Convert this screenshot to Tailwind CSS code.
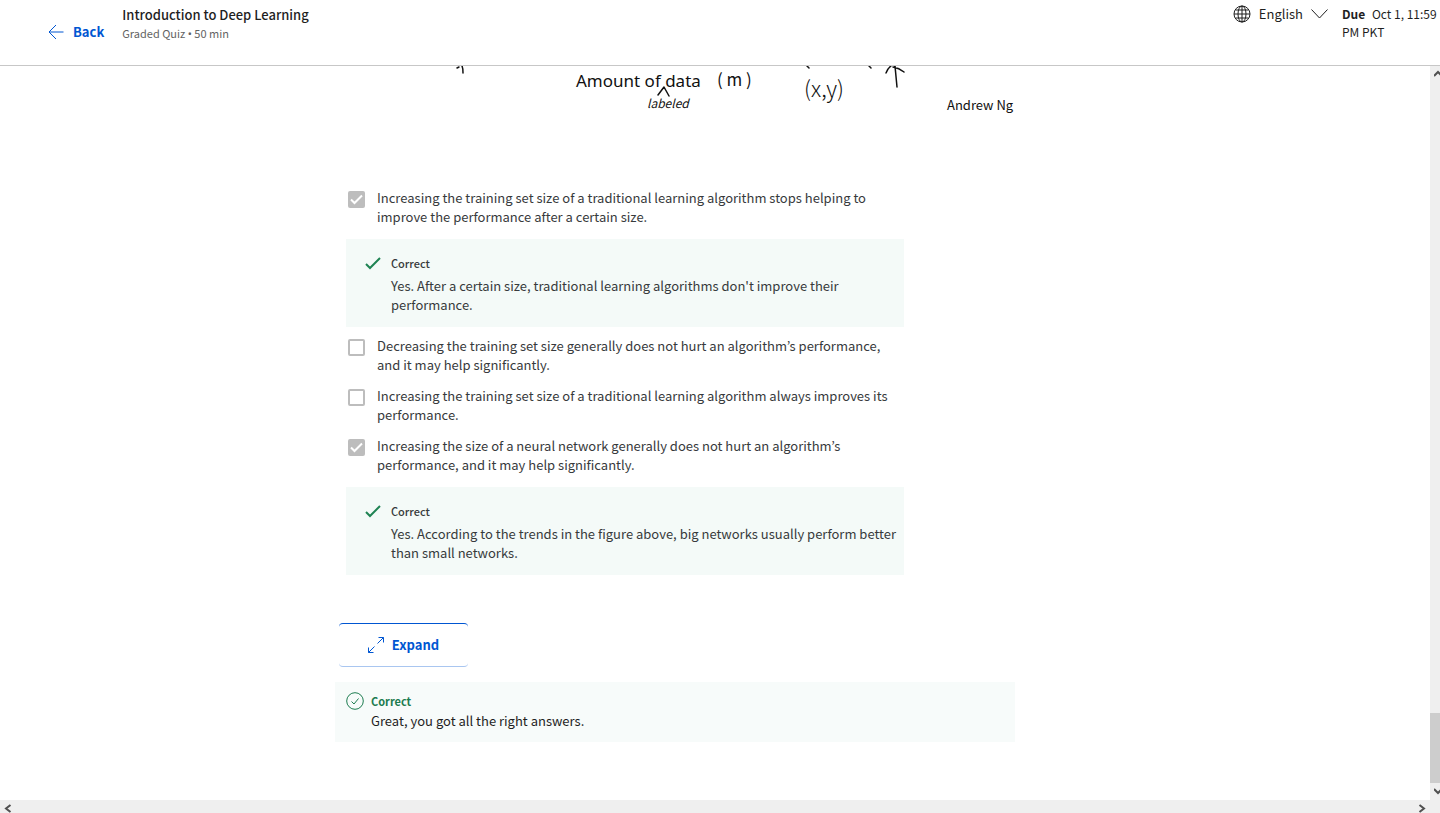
<!DOCTYPE html>
<html lang="en">
<head>
<meta charset="utf-8">
<meta name="viewport" content="width=device-width, initial-scale=1">
<title>Introduction to Deep Learning</title>
<script src="https://cdn.jsdelivr.net/npm/@tailwindcss/browser@4"></script>
</head>
<body class="flex h-screen flex-col overflow-hidden bg-white font-['Noto_Sans_CJK_KR','Noto_Sans',sans-serif] text-[#1f1f1f]">
<header class="flex h-[66px] shrink-0 items-start justify-between border-b border-[#c7c7c7]">
  <div class="flex items-start pl-12">
    <a href="#" class="flex items-center gap-2 pt-[22px] text-[13px] leading-5 font-bold text-[#0056d2]">
      <svg class="h-4 w-4" viewBox="0 0 16 16" fill="none" stroke="currentColor" stroke-width="1"><path d="M15.500 8H1M8 1L1 8l7 7"/></svg>
      <span class="pl-px">Back</span>
    </a>
    <div class="pt-[5px] pl-[18px]">
      <h1 class="text-[13px] leading-[19px] font-medium">Introduction to Deep Learning</h1>
      <p class="text-[11px] leading-[19px] text-[#636363]">Graded Quiz <span class="font-['Noto_Sans']">•</span> 50 min</p>
    </div>
  </div>
  <div class="flex items-start pt-[5px]">
    <button type="button" class="flex items-center gap-2 text-[13px] leading-[18px]">
      <svg class="h-[18px] w-[18px]" viewBox="0 0 18 18" fill="none" stroke="#1f1f1f" stroke-width="1"><circle cx="9" cy="9" r="8"/><ellipse cx="9" cy="9" rx="4" ry="8"/><path d="M9 1v16M1 9h16M2.500 5h13M2.500 13h13"/></svg>
      <span>English</span>
      <svg class="h-[10px] w-[17px]" viewBox="0 0 17 10" fill="none" stroke="#1f1f1f" stroke-width="1"><path d="M.5.500l8 8.500 8-8.500"/></svg>
    </button>
    <p class="ml-[14px] w-[98px] text-xs leading-[18px]"><strong class="mr-1 font-bold">Due</strong> Oct 1, 11:59 PM PKT</p>
  </div>
</header>

<div class="flex min-h-0 flex-1">
  <main class="min-w-0 flex-1 overflow-hidden pl-[335px] text-[#373a3c]">
    <div class="max-w-[680px]">
      <svg class="block h-[122px] w-[680px]" viewBox="0 0 680 122" fill="none" stroke="#111" stroke-width="1.500" stroke-linecap="round" stroke-linejoin="round" role="img" aria-label="Chart axis label">
        <path d="M122 2l2-1M127 0q1 2 1 7M323 29l6-8 5 9M472 0l2 2M534 0l2 2M551 7q2-5 5-7M560 0l2 21M558 1q6 1 11 5"/>
        <g stroke="none" fill="#111">
          <text x="241" y="21" font-family="Noto Sans, sans-serif" font-size="17">Amount of data</text>
          <text x="382" y="20" font-family="Noto Sans CJK KR, sans-serif" font-size="17">( m )</text>
          <text x="469" y="31" font-family="Noto Sans CJK KR, sans-serif" font-size="22" font-weight="300">(x,y)</text>
          <text x="312" y="42" font-family="Noto Sans CJK KR, sans-serif" font-size="12" font-style="italic">labeled</text>
          <text x="612" y="44" font-family="Noto Sans CJK KR, sans-serif" font-size="13">Andrew Ng</text>
        </g>
      </svg>

      <div class="pl-[11px] text-[13px] leading-[19px]">
        <div class="w-[558px]">
          <label class="flex gap-3 pr-1 pl-[2px]">
            <span class="relative mt-[3px] h-[17px] w-[17px] shrink-0">
              <input type="checkbox" checked disabled class="block h-[17px] w-[17px] appearance-none rounded-xs bg-[#bdbdbd]">
              <svg class="absolute inset-0" viewBox="0 0 17 17" fill="none" stroke="#fff" stroke-width="2"><path d="M3 8.500l3.500 3.500L14 4.500"/></svg>
            </span>
            <span>Increasing the training set size of a traditional learning algorithm stops helping to improve the performance after a certain size.</span>
          </label>
          <section class="mt-[13px] flex gap-[10px] bg-[#f4faf8] pt-[15px] pr-1 pb-[13px] pl-[19px]">
            <svg class="mt-[3px] h-[13px] w-4 shrink-0" viewBox="0 0 16 13" fill="none" stroke="#1f8354" stroke-width="2"><path d="M1 7l4 4L15 1"/></svg>
            <div><h2 class="mb-[3px] text-[11px] leading-[19px] font-medium">Correct</h2><p>Yes. After a certain size, traditional learning algorithms don't improve their performance.</p></div>
          </section>
          <label class="mt-[9px] flex gap-3 pr-1 pl-[2px]">
            <input type="checkbox" disabled class="mt-[3px] block h-[17px] w-[17px] shrink-0 appearance-none rounded-xs border-2 border-[#bdbdbd] bg-white">
            <span>Decreasing the training set size generally does not hurt an algorithm’s performance, and it may help significantly.</span>
          </label>
          <label class="mt-3 flex gap-3 pr-1 pl-[2px]">
            <input type="checkbox" disabled class="mt-[3px] block h-[17px] w-[17px] shrink-0 appearance-none rounded-xs border-2 border-[#bdbdbd] bg-white">
            <span>Increasing the training set size of a traditional learning algorithm always improves its performance.</span>
          </label>
          <label class="mt-3 flex gap-3 pr-1 pl-[2px]">
            <span class="relative mt-[3px] h-[17px] w-[17px] shrink-0">
              <input type="checkbox" checked disabled class="block h-[17px] w-[17px] appearance-none rounded-xs bg-[#bdbdbd]">
              <svg class="absolute inset-0" viewBox="0 0 17 17" fill="none" stroke="#fff" stroke-width="2"><path d="M3 8.500l3.500 3.500L14 4.500"/></svg>
            </span>
            <span>Increasing the size of a neural network generally does not hurt an algorithm’s performance, and it may help significantly.</span>
          </label>
          <section class="mt-[13px] flex gap-[10px] bg-[#f4faf8] pt-[15px] pr-1 pb-[13px] pl-[19px]">
            <svg class="mt-[3px] h-[13px] w-4 shrink-0" viewBox="0 0 16 13" fill="none" stroke="#1f8354" stroke-width="2"><path d="M1 7l4 4L15 1"/></svg>
            <div><h2 class="mb-[3px] text-[11px] leading-[19px] font-medium">Correct</h2><p>Yes. According to the trends in the figure above, big networks usually perform better than small networks.</p></div>
          </section>
        </div>
      </div>

      <button type="button" class="mt-12 ml-1 flex h-11 w-[129px] items-center justify-center gap-2 rounded border-y border-t-[#0056d2] border-b-[#a9c6f0] text-[13px] font-bold text-[#0056d2]">
        <svg class="h-4 w-4" viewBox="0 0 16 16" fill="none" stroke="currentColor" stroke-width="1"><path d="M9.500 6.500l6-6M10.500.500h5v5M6.500 9.500l-6 6M.500 10.500v5h5"/></svg>
        Expand
      </button>
      <section class="mt-[15px] flex gap-[7px] bg-[#f7fbfa] pt-[9px] pb-[11px] pl-[11px] text-[13px] leading-5 text-[#1f1f1f]">
        <svg class="mt-px h-[18px] w-[18px] shrink-0" viewBox="0 0 18 18" fill="none" stroke="#1d7c50" stroke-width="1"><circle cx="9" cy="9" r="8.300"/><path d="M5.500 9.500l2.500 2.500 4.500-5.500"/></svg>
        <div><h2 class="text-[11px] leading-5 font-bold text-[#1d7c50]">Correct</h2><p>Great, you got all the right answers.</p></div>
      </section>
    </div>
  </main>
  <div class="flex w-[10px] shrink-0 flex-col items-end overflow-hidden bg-[#efefef]" aria-hidden="true">
    <svg class="mt-1 h-[7px] w-[6px] shrink-0" viewBox="0 0 6 7" fill="none" stroke="#505050" stroke-width="2"><path d="M0 6l4-4 4 4"/></svg>
    <div class="flex-1"></div>
    <div class="h-[70px] w-full bg-[#cdcdcd]"></div>
    <svg class="mt-[5px] mb-[5px] h-[7px] w-[6px] shrink-0" viewBox="0 0 6 7" fill="none" stroke="#505050" stroke-width="2"><path d="M0 1l4 4 4-4"/></svg>
  </div>
</div>
<div class="flex h-[13px] shrink-0 items-end justify-between bg-[#efefef] pr-[14px] pl-1" aria-hidden="true">
  <svg class="h-[9px] w-2" viewBox="0 0 8 9" fill="none" stroke="#505050" stroke-width="2"><path d="M6.500 1L2 4.500 6.500 8"/></svg>
  <svg class="h-[9px] w-2" viewBox="0 0 8 9" fill="none" stroke="#505050" stroke-width="2"><path d="M1.500 1L6 4.500 1.500 8"/></svg>
</div>
</body>
</html>
